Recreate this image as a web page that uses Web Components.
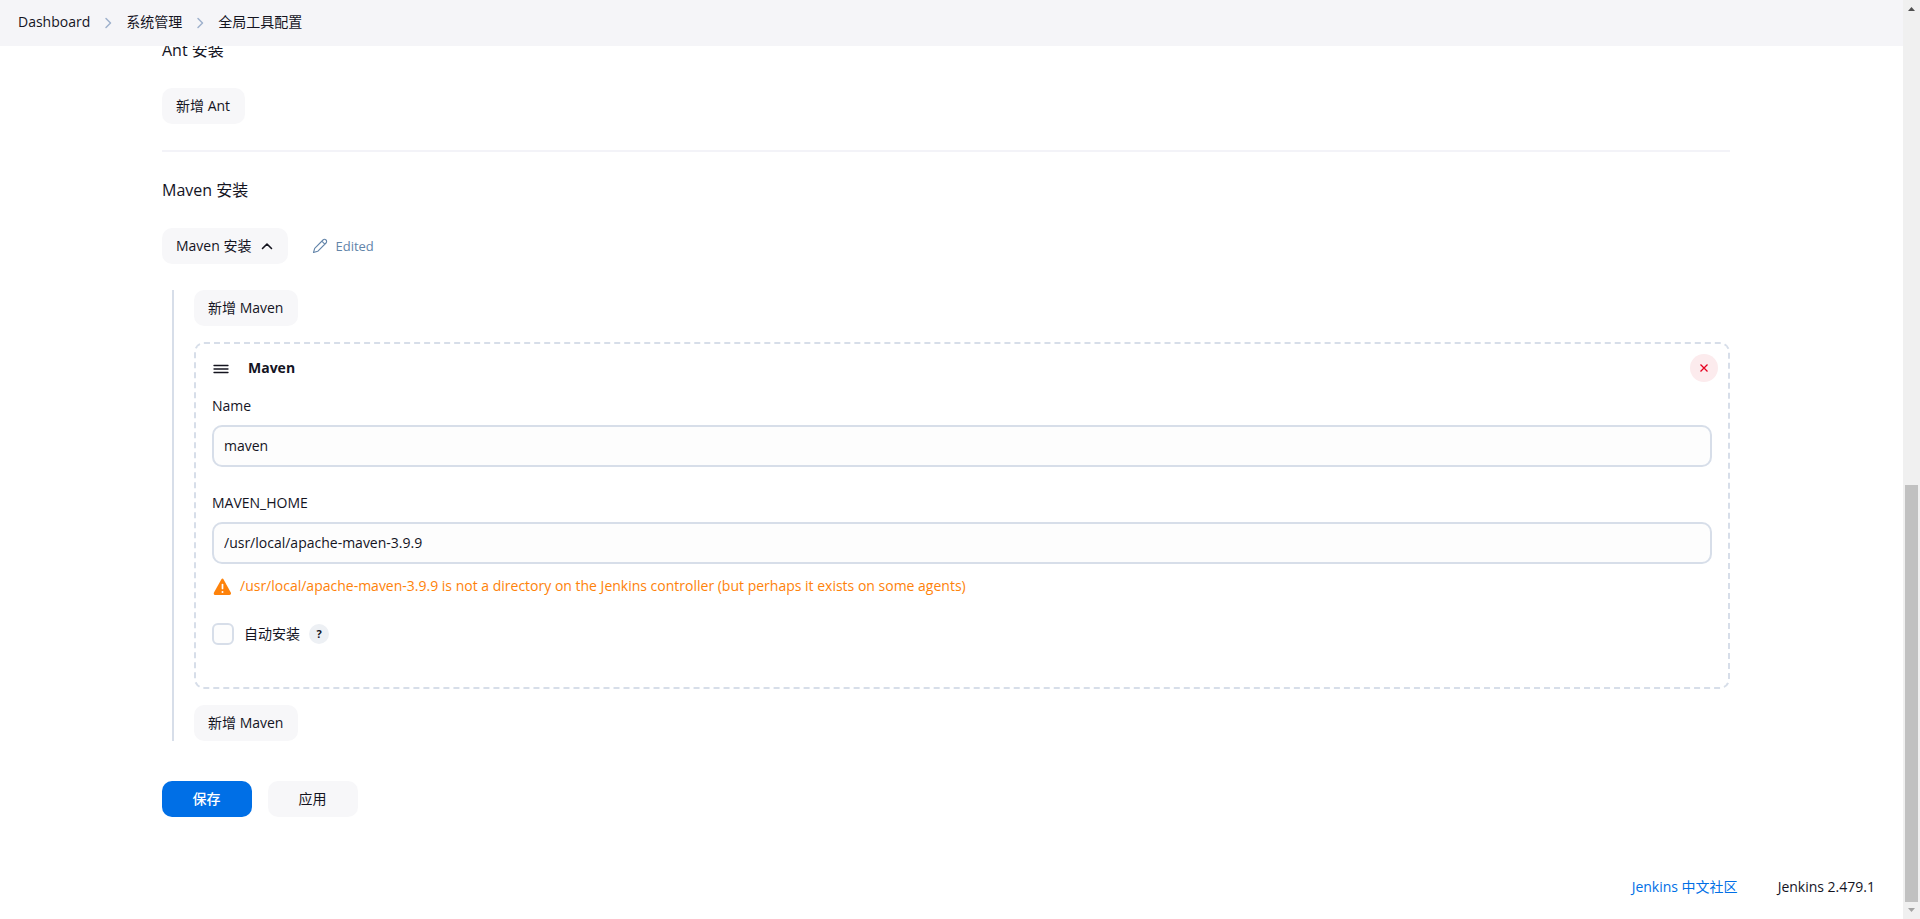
<!DOCTYPE html>
<html lang="zh-CN">
<head>
<meta charset="utf-8">
<title>全局工具配置 [Jenkins]</title>
<style>
  body {
    margin: 0;
    color: #14141f;
    background: #fff;
    font: 14px/20px "Open Sans", "Noto Sans CJK SC", sans-serif;
  }
</style>
</head>
<body>
<jk-app></jk-app>
<script>
const define = (name, html, setup) => {
  const template = document.createElement('template');
  template.innerHTML = html;
  customElements.define(name, class extends HTMLElement {
    constructor() {
      super();
      this.attachShadow({ mode: 'open' }).append(template.content.cloneNode(true));
    }
    connectedCallback() {
      if (setup) setup(this, this.shadowRoot);
    }
  });
};

/* Breadcrumb bar, fixed above the scrolled form */
define('jk-breadcrumbs', `
  <style>
    :host { display: block; position: sticky; top: 0; z-index: 1; background: #f5f5f8; }
    ol { display: flex; align-items: center; gap: 14px; margin: 0; padding: 12px 18px 14px; list-style: none; }
    li { display: flex; align-items: center; gap: 14px; }
    a { color: inherit; text-decoration: none; }
    svg { width: 8px; height: 12px; margin-top: 2px; fill: none; stroke: #9fb1cc; stroke-width: 1.5; stroke-linecap: round; stroke-linejoin: round; }
  </style>
  <nav aria-label="breadcrumb"><ol>
    <li><a href="#dashboard">Dashboard</a><svg viewBox="0 0 8 12"><path d="M2 1.500 6.500 6 2 10.500"/></svg></li>
    <li><a href="#manage">系统管理</a><svg viewBox="0 0 8 12"><path d="M2 1.500 6.500 6 2 10.500"/></svg></li>
    <li><a href="#tools">全局工具配置</a></li>
  </ol></nav>`);

define('jk-button', `
  <style>
    :host { display: block; }
    button {
      display: flex; align-items: center; justify-content: center; gap: 10px;
      height: 36px; padding: 0 15px 0 14px; border: 0; border-radius: 10px;
      color: inherit; background: #f7f7f9; font: inherit; white-space: nowrap; cursor: pointer;
    }
    :host([wide]) button { min-width: 90px; }
    :host([primary]) button { color: #fff; background: #006fe6; font-weight: 500; }
  </style>
  <button type="button"><slot></slot></button>`);

define('jk-heading', `
  <style>
    :host { display: block; }
    h2 { margin: 0; font-size: 16px; line-height: 24px; font-weight: 400; }
  </style>
  <h2><slot></slot></h2>`);

define('jk-field', `
  <style>
    :host { display: flex; flex-direction: column; gap: 9px; }
    input {
      box-sizing: border-box; width: 100%; height: 42px; padding: 0 10px 2px;
      border: 2px solid #d7dee9; border-radius: 10px; outline: 0;
      color: inherit; background: #fdfdfd; font: inherit;
    }
  </style>
  <label for="field"></label>
  <input id="field" type="text">`,
  (host, root) => {
    root.querySelector('label').textContent = host.getAttribute('label');
    root.querySelector('input').value = host.getAttribute('value');
  });

define('jk-warning', `
  <style>
    :host { display: flex; align-items: center; gap: 8px; color: #fe820a; }
    svg { flex: none; width: 20px; height: 18px; margin-top: 2px; }
  </style>
  <svg viewBox="0 0 20 18">
    <path fill="#fe820a" d="M9.300 1.400Q10.500-.2 11.600 1.400L18.800 14.500Q19.500 16.800 17.500 17H3.200Q1.200 16.800 2 14.500Z"/>
    <path stroke="#fff" stroke-width="1.700" stroke-linecap="round" d="M10.500 6.500v4"/><circle cx="10.500" cy="14" r="1" fill="#fff"/>
  </svg>
  <span><slot></slot></span>`);

define('jk-checkbox', `
  <style>
    :host { display: flex; align-items: center; height: 22px; }
    label { display: flex; align-items: center; gap: 10px; }
    input {
      appearance: none; box-sizing: border-box; width: 22px; height: 22px; margin: 0;
      border: 2px solid #d7dee9; border-radius: 6px; background: #fdfdfd;
    }
    button {
      width: 20px; height: 20px; margin-left: 9px; padding: 0; border: 0; border-radius: 50%;
      color: inherit; background: #edf0f4; font: 700 11px/20px "Open Sans", sans-serif;
    }
  </style>
  <label><input type="checkbox"><slot></slot></label>
  <button type="button">?</button>`);

/* Draggable chunk with a title and a delete button */
define('jk-chunk', `
  <style>
    :host { display: block; padding: 10px 16px 42px; border: 2px dashed #d7dee9; border-radius: 10px; }
    header { display: flex; align-items: center; height: 28px; margin: 0 -6px 14px 0; }
    .handle { width: 18px; height: 20px; margin-right: 18px; stroke: #14141f; stroke-width: 1.300; stroke-linecap: round; }
    b { flex: 1; font-weight: 700; }
    button {
      display: grid; place-items: center; width: 28px; height: 28px; padding: 0;
      border: 0; border-radius: 50%; background: #fcebed;
    }
    button svg { width: 10px; height: 10px; stroke: #e6001f; stroke-width: 1.300; }
  </style>
  <header>
    <svg class="handle" viewBox="0 0 18 20"><path d="M2 7.500h14M2 11h14M2 14.500h14"/></svg>
    <b></b>
    <button type="button" aria-label="delete"><svg viewBox="0 0 10 10"><path d="M1.500 1.500l7 7M8.500 1.500l-7 7"/></svg></button>
  </header>
  <slot></slot>`,
  (host, root) => { root.querySelector('b').textContent = host.getAttribute('name'); });

define('jk-edited', `
  <style>
    :host { display: flex; align-items: center; gap: 7px; color: #6284a9; font-size: 13px; }
    svg { width: 16px; height: 16px; fill: none; stroke: currentColor; stroke-width: 1.100; stroke-linejoin: round; }
  </style>
  <svg viewBox="0 0 16 16"><path d="M1.500 14.500l1.200-4.200L11 2a2 2 0 0 1 3 3l-8.300 8.300zM9.800 3.200l3 3"/></svg>
  <span><slot></slot></span>`);

define('jk-footer', `
  <style>
    :host { display: flex; justify-content: flex-end; align-items: center; gap: 40px; padding: 40px 28px 22px; }
    a { color: #006fe6; text-decoration: none; }
    button { padding: 0; border: 0; color: inherit; background: none; font: inherit; }
  </style>
  <a href="#community">Jenkins 中文社区</a>
  <button type="button">Jenkins 2.479.1</button>`);

/* Scroll rail: arrows at both ends, thumb at the bottom of the track */
define('jk-scrollbar', `
  <style>
    :host {
      display: flex; flex-direction: column; align-items: center;
      position: sticky; top: 0; height: 100vh; background: #f0f0f0;
    }
    svg { flex: none; width: 17px; height: 17px; }
    .space { flex: 468; }
    .thumb { flex: 417; width: 13px; background: #c1c1c1; }
  </style>
  <svg viewBox="0 0 17 17"><path fill="#505050" d="M5 11h7L8.500 7z"/></svg>
  <div class="space"></div><div class="thumb"></div>
  <svg viewBox="0 0 17 17"><path fill="#a3a3a3" d="M5 6h7l-3.500 4z"/></svg>`);

define('jk-app', `
  <style>
    :host { display: grid; grid-template-columns: 1fr 17px; }
    .page { display: flex; flex-direction: column; min-height: 100vh; }
    main { display: flex; flex-direction: column; gap: 26px; margin: -8px 173px 0 162px; }
    hr { width: 100%; height: 2px; margin: 0; border: 0; background: #f3f3f8; }
    .row { display: flex; gap: 24px; }
    .group {
      display: flex; flex-direction: column; align-items: flex-start; gap: 16px;
      margin-left: 10px; padding-left: 20px; border-left: 2px solid #d7dee9;
    }
    jk-chunk { align-self: stretch; }
    jk-field + jk-field { margin-top: 26px; }
    jk-warning { margin-top: 12px; height: 20px; }
    jk-checkbox { margin-top: 27px; }
    .chevron { width: 12px; height: 8px; fill: none; stroke: #14141f; stroke-width: 1.600; stroke-linecap: round; stroke-linejoin: round; }
    .actions { gap: 16px; margin-top: 14px; }
    jk-footer { margin-top: auto; }
  </style>
  <div class="page">
    <jk-breadcrumbs></jk-breadcrumbs>
    <main>
      <jk-heading>Ant 安装</jk-heading>
      <div class="row"><jk-button>新增 Ant</jk-button></div>
      <hr>
      <jk-heading>Maven 安装</jk-heading>
      <div class="row">
        <jk-button>Maven 安装<svg class="chevron" viewBox="0 0 12 8"><path d="M1.500 6.500 6 2l4.500 4.500"/></svg></jk-button>
        <jk-edited>Edited</jk-edited>
      </div>
      <div class="group">
        <jk-button>新增 Maven</jk-button>
        <jk-chunk name="Maven">
          <jk-field label="Name" value="maven"></jk-field>
          <jk-field label="MAVEN_HOME" value="/usr/local/apache-maven-3.9.9"></jk-field>
          <jk-warning>/usr/local/apache-maven-3.9.9 is not a directory on the Jenkins controller (but perhaps it exists on some agents)</jk-warning>
          <jk-checkbox>自动安装</jk-checkbox>
        </jk-chunk>
        <jk-button>新增 Maven</jk-button>
      </div>
      <div class="row actions">
        <jk-button primary wide>保存</jk-button>
        <jk-button wide>应用</jk-button>
      </div>
    </main>
    <jk-footer></jk-footer>
  </div>
  <jk-scrollbar aria-hidden="true"></jk-scrollbar>`);
</script>
</body>
</html>
